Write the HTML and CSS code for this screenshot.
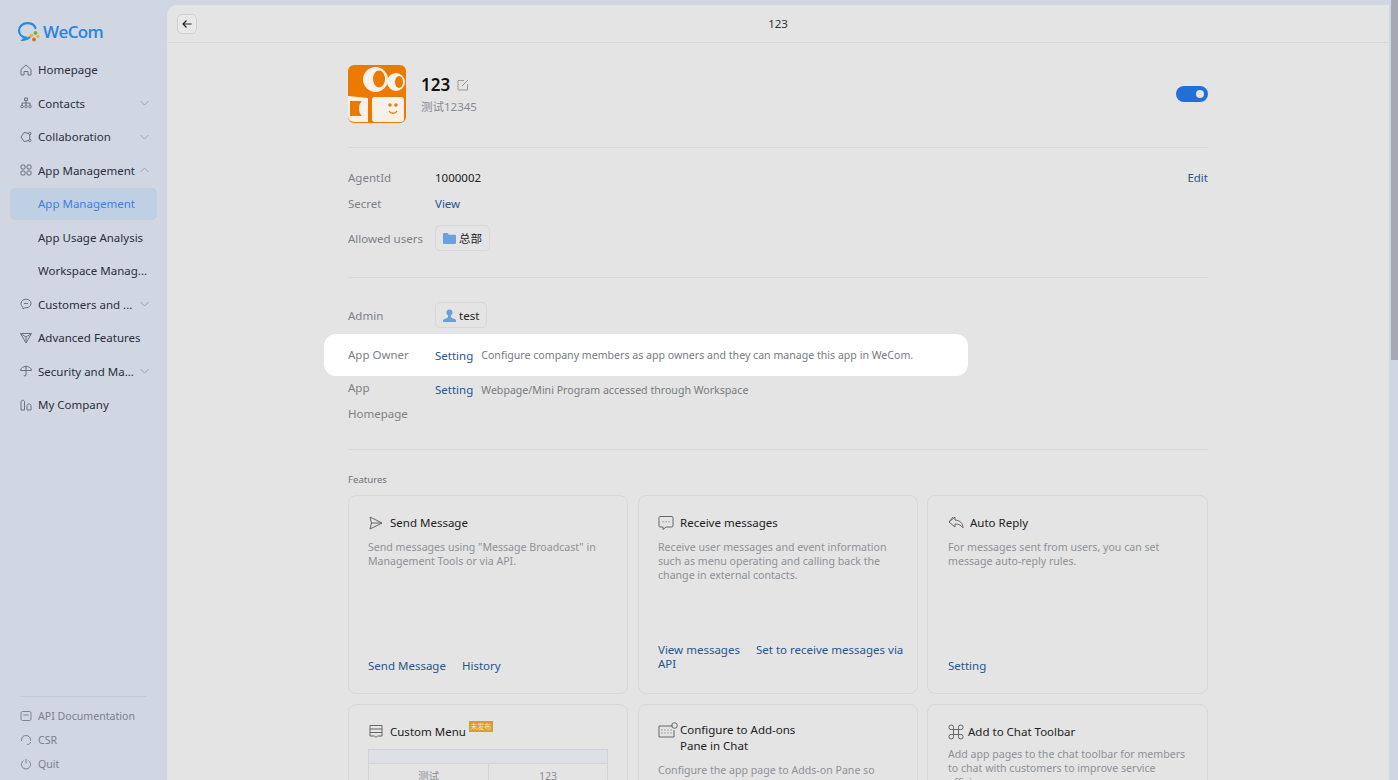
FILE: index.html
```html
<!DOCTYPE html>
<html lang="en">
<head>
  <meta charset="UTF-8" />
  <title>WeCom App Management</title>
  <link rel="stylesheet" href="styles.css">
</head>
<body>
  <aside class="sidebar">
    <div class="logo">
      <svg class="logo-mark" width="24" height="20" viewBox="0 0 24 20">
        <path d="M18.500 6C17.200 3 14.300 1.200 10.500 1.200 5.500 1.200 2 4.500 2 8.500c0 3.800 3 6.500 6.500 7l-2.500 2.500c2.500 0 5-1.200 6.500-2.500" fill="none" stroke="#2b8ae0" stroke-width="2.200" stroke-linecap="round"/>
        <circle cx="18.500" cy="11" r="1.900" fill="#6fb52c"/>
        <circle cx="21" cy="14.500" r="1.600" fill="#f0b020"/>
        <circle cx="17" cy="17.500" r="1.900" fill="#e8642c"/>
        <circle cx="14.500" cy="13.500" r="1.800" fill="#f0b020"/>
      </svg>
      <span class="logo-text">WeCom</span>
    </div>
    <nav class="menu">
      <a class="menu-item">
        <svg class="menu-icon" viewBox="0 0 12 12"><path d="M1 5.500 6 1l5 4.500V11H8V7.500H4V11H1z"/></svg>
        <span class="menu-label">Homepage</span>
      </a>
      <a class="menu-item">
        <svg class="menu-icon" viewBox="0 0 12 12"><path d="M4.500 1h3v2.500h-3zM6 3.500V6M2 8V6h8v2M6 6v2"/><circle cx="2" cy="9.500" r="1.300"/><circle cx="6" cy="9.500" r="1.300"/><circle cx="10" cy="9.500" r="1.300"/></svg>
        <span class="menu-label">Contacts</span>
        <svg class="chevron" viewBox="0 0 10 6"><path d="M1 1l4 4 4-4"/></svg>
      </a>
      <a class="menu-item">
        <svg class="menu-icon" viewBox="0 0 12 12"><path d="M9 2.500 4 1.500 1 6l3 4.500 5-1"/><circle cx="9.800" cy="2.500" r="1.200"/><circle cx="9.800" cy="9.500" r="1.200"/><path d="M9.800 3.700v4.600"/></svg>
        <span class="menu-label">Collaboration</span>
        <svg class="chevron" viewBox="0 0 10 6"><path d="M1 1l4 4 4-4"/></svg>
      </a>
      <a class="menu-item">
        <svg class="menu-icon" viewBox="0 0 12 12"><rect x="1" y="1" width="4" height="4" rx="1"/><rect x="7" y="1" width="4" height="4" rx="1"/><rect x="1" y="7" width="4" height="4" rx="1"/><rect x="7" y="7" width="4" height="4" rx="1"/></svg>
        <span class="menu-label">App Management</span>
        <svg class="chevron" viewBox="0 0 10 6"><path d="M1 5l4-4 4 4"/></svg>
      </a>
      <a class="menu-item active"><span class="menu-label sub">App Management</span></a>
      <a class="menu-item"><span class="menu-label sub">App Usage Analysis</span></a>
      <a class="menu-item"><span class="menu-label sub">Workspace Manag...</span></a>
      <a class="menu-item">
        <svg class="menu-icon" viewBox="0 0 12 12"><path d="M6 1.200c2.800 0 5 1.900 5 4.300S8.800 9.800 6 9.800H4.500L3 11V9.300C1.800 8.500 1 7.100 1 5.500 1 3.100 3.200 1.200 6 1.200zM4 5.500h4"/></svg>
        <span class="menu-label">Customers and ...</span>
        <svg class="chevron" viewBox="0 0 10 6"><path d="M1 1l4 4 4-4"/></svg>
      </a>
      <a class="menu-item">
        <svg class="menu-icon" viewBox="0 0 12 12"><path d="M.500 1.500h11L6 11zM.500 1.500 6 5l5.500-3.500M6 5v6"/></svg>
        <span class="menu-label">Advanced Features</span>
      </a>
      <a class="menu-item">
        <svg class="menu-icon" viewBox="0 0 12 12"><path d="M.500 5.500C.500 3 3 1.500 6 1.500s5.500 1.500 5.500 4zM6 .500V10c0 1.400-2 1.400-2 0"/></svg>
        <span class="menu-label">Security and Ma...</span>
        <svg class="chevron" viewBox="0 0 10 6"><path d="M1 1l4 4 4-4"/></svg>
      </a>
      <a class="menu-item">
        <svg class="menu-icon" viewBox="0 0 12 12"><path d="M1 11V3c0-2.400 3.500-2.400 3.500 0v8zM7 11V6.500c0-2 4-2 4 0V11z"/></svg>
        <span class="menu-label">My Company</span>
      </a>
    </nav>
    <div class="sidebar-foot">
      <a class="foot-item">
        <svg class="foot-icon" viewBox="0 0 12 12"><rect x="1" y="1.500" width="10" height="9" rx="1.500"/><path d="M3.500 5h5"/></svg>
        <span>API Documentation</span>
      </a>
      <a class="foot-item">
        <svg class="foot-icon" viewBox="0 0 12 12"><path d="M1.500 7V5.800C1.500 3.200 3.500 1.500 6 1.500s4.500 1.700 4.500 4.300V7M10.500 8c0 1.600-1.400 2.500-3.500 2.500"/></svg>
        <span>CSR</span>
      </a>
      <a class="foot-item">
        <svg class="foot-icon" viewBox="0 0 12 12"><path d="M3.500 2.500a4.600 4.600 0 1 0 5 0M6 1v4.500"/></svg>
        <span>Quit</span>
      </a>
    </div>
  </aside>

  <main class="main">
    <header class="topbar">
      <button class="back-btn">
        <svg width="10" height="10" viewBox="0 0 10 10"><path d="M9.500 5H1M4.500 1.500 1 5l3.500 3.500" fill="none" stroke="#222" stroke-width="1.200"/></svg>
      </button>
      <div class="topbar-title">123</div>
    </header>

    <div class="content">
      <section class="app-head">
        <svg class="app-icon" width="58" height="58" viewBox="0 0 58 58">
          <rect width="58" height="58" rx="6" fill="#ec7a00"/>
          <circle cx="27.500" cy="14.500" r="12.500" fill="#f9f1e8"/>
          <ellipse cx="31" cy="14" rx="6" ry="8.500" fill="#ec7a00"/>
          <circle cx="48" cy="17" r="9" fill="#f9f1e8"/>
          <ellipse cx="51" cy="17" rx="4" ry="6" fill="#ec7a00"/>
          <rect x="24" y="32" width="32" height="25" rx="3" fill="#f9f1e8"/>
          <circle cx="42" cy="40" r="1.700" fill="#ec7a00"/>
          <circle cx="48" cy="40" r="1.700" fill="#ec7a00"/>
          <path d="M41 46c2 3 6 3 8 0" fill="none" stroke="#ec7a00" stroke-width="1.300"/>
          <path d="M0 31l20 2v24H6a6 6 0 0 1-6-6z" fill="#f9f1e8"/>
          <path d="M2 36h12c-4 3-4 12 0 15H2z" fill="#ec7a00"/>
        </svg>
        <div class="app-meta">
          <div class="app-name">
            <span>123</span>
            <svg class="edit-icon" width="12" height="12" viewBox="0 0 12 12"><path d="M7 1.500H1v9.500h9.500V5M5 7l6-6" fill="none" stroke="#999" stroke-width="1"/></svg>
          </div>
          <div class="app-desc">测试12345</div>
        </div>
        <div class="switch"><span class="switch-knob"></span></div>
      </section>

      <section class="info">
        <div class="info-row">
          <div class="info-label">AgentId</div>
          <div class="info-value">1000002</div>
          <a class="link edit-link">Edit</a>
        </div>
        <div class="info-row">
          <div class="info-label">Secret</div>
          <a class="link">View</a>
        </div>
        <div class="info-row row-users">
          <div class="info-label">Allowed users</div>
          <span class="chip">
            <svg width="13" height="11" viewBox="0 0 14 11" preserveAspectRatio="none"><path d="M0 1.500C0 .7.500 0 1.300 0h3.500l1.500 1.800h6.400c.7 0 1.300.6 1.300 1.300v6.600c0 .7-.6 1.300-1.300 1.300H1.300C.5 11 0 10.400 0 9.700z" fill="#6a9fe0"/></svg>
            总部
          </span>
        </div>
      </section>

      <section class="info info-admin">
        <div class="info-row">
          <div class="info-label">Admin</div>
          <span class="chip">
            <svg width="13" height="13" viewBox="0 0 12 12"><circle cx="6" cy="3.200" r="2.800" fill="#6a9fe0"/><path d="M4.800 5.500h2.400l.3 2.300L12 10v2H0v-2l4.500-2.200z" fill="#6a9fe0"/></svg>
            test
          </span>
        </div>
        <div class="info-row spotlight">
          <div class="info-label">App Owner</div>
          <a class="link">Setting</a>
          <span class="info-note">Configure company members as app owners and they can manage this app in WeCom.</span>
        </div>
        <div class="info-row row-home">
          <div class="info-label tall">App<br>Homepage</div>
          <a class="link">Setting</a>
          <span class="info-note">Webpage/Mini Program accessed through Workspace</span>
        </div>
      </section>

      <section class="features">
        <div class="features-title">Features</div>
        <div class="card-grid">
          <div class="card">
            <div class="card-head">
              <svg class="card-icon" viewBox="0 0 16 16"><path d="M2 2l12 6-12 6 1.500-6zM3.500 8H14"/></svg>
              <span class="card-title">Send Message</span>
            </div>
            <p class="card-desc">Send messages using "Message Broadcast" in Management Tools or via API.</p>
            <div class="card-links"><a class="link">Send Message</a><a class="link">History</a></div>
          </div>
          <div class="card">
            <div class="card-head">
              <svg class="card-icon" viewBox="0 0 16 16"><path d="M2 1.500h12c.5 0 1 .5 1 1v8.500c0 .5-.5 1-1 1H8l-3 2.500V12H2c-.5 0-1-.5-1-1V2.500c0-.5.5-1 1-1zM4.500 6.800h1M7.500 6.800h1M10.500 6.800h1"/></svg>
              <span class="card-title">Receive messages</span>
            </div>
            <p class="card-desc">Receive user messages and event information such as menu operating and calling back the change in external contacts.</p>
            <div class="card-links two-line"><a class="link">View messages</a><a class="link">Set to receive messages via API</a></div>
          </div>
          <div class="card">
            <div class="card-head">
              <svg class="card-icon" viewBox="0 0 16 16"><path d="M7 2 1 7l6 5V9c3.500 0 6 1 8 4 0-5-3-7.500-8-8zM5 2 1 7"/></svg>
              <span class="card-title">Auto Reply</span>
            </div>
            <p class="card-desc">For messages sent from users, you can set message auto-reply rules.</p>
            <div class="card-links"><a class="link">Setting</a></div>
          </div>
          <div class="card">
            <div class="card-head">
              <svg class="card-icon" viewBox="0 0 16 16"><path d="M2 1.500h12v10.500H9.500L8 13.500 6.500 12H2zM2 5h12M2 8.500h12"/></svg>
              <span class="card-title">Custom Menu</span>
              <span class="badge">未发布</span>
            </div>
            <div class="menu-table">
              <div class="menu-table-top"></div>
              <div class="menu-table-row"><span>测试</span><span>123</span></div>
            </div>
          </div>
          <div class="card">
            <div class="card-head wrap">
              <svg class="card-icon addon" viewBox="0 0 20 16"><path d="M15 4H1v11h15V8M3.500 8h1M6.500 8h1M9.500 8h1M12.500 8h1M3.500 11h1M6.500 11h1M9.500 11h1M12.500 11h1"/><circle cx="16.500" cy="3.500" r="2.800"/></svg>
              <span class="card-title">Configure to Add-ons<br>Pane in Chat</span>
            </div>
            <p class="card-desc">Configure the app page to Adds-on Pane so that members can quickly use this app in a chat.</p>
          </div>
          <div class="card">
            <div class="card-head tight">
              <svg class="card-icon" viewBox="0 0 16 16"><path d="M5.500 5.500h5v5h-5zM5.500 5.500H3.800a2.300 2.300 0 1 1 1.700-2zM10.500 5.500h1.700a2.300 2.300 0 1 0-1.700-2zM5.500 10.500H3.800a2.300 2.300 0 1 0 1.700 2zM10.500 10.500h1.700a2.300 2.300 0 1 1-1.700 2z"/></svg>
              <span class="card-title">Add to Chat Toolbar</span>
            </div>
            <p class="card-desc">Add app pages to the chat toolbar for members to chat with customers to improve service efficiency.</p>
          </div>
        </div>
      </section>
    </div>
  </main>

  <div class="scrollbar"><div class="scrollbar-thumb"></div></div>
</body>
</html>
```

FILE: styles.css
```css
* {
  box-sizing: border-box;
}

html,
body {
  height: 100%;
}

body {
  margin: 0;
  display: flex;
  overflow: hidden;
  background-color: #d0d7e3;
  color: #222;
  font-family: "Noto Sans", "Noto Sans CJK SC", sans-serif;
  font-size: 11.5px;
}

a {
  cursor: pointer;
}

/* sidebar */
.sidebar {
  width: 167px;
  flex-shrink: 0;
  height: 780px;
  display: flex;
  flex-direction: column;
  padding: 0 10px;
}

.logo {
  height: 53px;
  padding: 10px 0 0 7px;
  display: flex;
  align-items: center;
  gap: 2px;
}

.logo-text {
  color: #2b84dc;
  font-family: "Open Sans", sans-serif;
  font-size: 17px;
  font-weight: 600;
  letter-spacing: -0.6px;
}

.menu {
  display: flex;
  flex-direction: column;
}

.menu-item {
  height: 33.5px;
  display: flex;
  align-items: center;
  padding: 0 7px 0 10px;
  color: #2a2f3a;
  border-radius: 5px;
}

.menu-item.active {
  background-color: #bfcfe4;
  color: #3f7fdc;
  height: 32px;
  margin: 0.5px 0 1px;
}

.menu-icon {
  width: 12px;
  height: 12px;
  margin-right: 6px;
  flex-shrink: 0;
  fill: none;
  stroke: #6b7280;
  stroke-width: 1;
}

.menu-label {
  flex: 1;
  white-space: nowrap;
}

.menu-label.sub {
  padding-left: 18px;
}

.chevron {
  width: 11px;
  height: 6px;
  flex-shrink: 0;
  fill: none;
  stroke: #9aa3b0;
  stroke-width: 1;
}

.sidebar-foot {
  margin: auto 10px 0;
  border-top: 1px solid #c3cbd8;
  padding: 7px 0 4px;
  display: flex;
  flex-direction: column;
}

.foot-item {
  height: 24px;
  display: flex;
  align-items: center;
  gap: 6px;
  color: #7b818d;
  font-size: 10.6px;
}

.foot-icon {
  width: 12px;
  height: 12px;
  fill: none;
  stroke: #7f8590;
  stroke-width: 1;
}

/* main panel */
.main {
  width: 1222px;
  flex-shrink: 0;
  height: 775px;
  margin-top: 5px;
  background-color: #e4e4e4;
  border-top-left-radius: 10px;
  overflow: hidden;
}

.topbar {
  height: 38px;
  display: flex;
  align-items: center;
  padding-left: 10px;
  border-bottom: 1px solid #d8d8d8;
}

.back-btn {
  width: 20px;
  height: 20px;
  padding: 0;
  display: flex;
  align-items: center;
  justify-content: center;
  background: #e9e9e9;
  border: 1px solid #cfcfcf;
  border-radius: 5px;
}

.topbar-title {
  flex: 1;
  padding-right: 30px;
  text-align: center;
  color: #333;
}

.content {
  width: 860px;
  margin: 0 auto;
}

.app-head {
  display: flex;
  align-items: center;
  padding: 22px 0 24px;
  border-bottom: 1px solid #d8d8d8;
}

.app-icon {
  flex-shrink: 0;
}

.app-meta {
  flex: 1;
  margin-left: 15px;
}

.app-name {
  display: flex;
  align-items: center;
  gap: 7px;
  font-size: 17px;
  font-weight: 600;
  color: #111;
  line-height: 24px;
}

.app-desc {
  margin-top: 2px;
  color: #888c94;
  line-height: 16px;
}

.switch {
  width: 32px;
  height: 16px;
  padding: 4px;
  display: flex;
  justify-content: flex-end;
  background-color: #2170d8;
  border-radius: 8px;
}

.switch-knob {
  width: 8px;
  height: 8px;
  background-color: #e4e4e4;
  border-radius: 50%;
}

.info {
  padding: 16px 0 26px;
  border-bottom: 1px solid #d8d8d8;
}

.info-admin {
  padding: 24px 0 22px;
}

.info-row {
  display: flex;
  align-items: center;
  min-height: 26px;
}

.row-users {
  margin-top: 9px;
}

.info-label {
  width: 87px;
  flex-shrink: 0;
  color: #7d8087;
}

.info-label.tall {
  line-height: 26px;
}

.row-home {
  align-items: flex-start;
  margin-top: -1px;
}

.row-home .link,
.row-home .info-note {
  padding-top: 2px;
  line-height: 26px;
}

.info-value {
  flex: 1;
  color: #222;
}

.link {
  color: #27558e;
}

.edit-link {
  margin-left: auto;
}

.info-note {
  margin-left: 8px;
  color: #777b82;
  font-size: 10.6px;
}

.chip {
  height: 26px;
  padding: 0 7px;
  display: inline-flex;
  align-items: center;
  gap: 3px;
  border: 1px solid #d8d8d8;
  border-radius: 5px;
  color: #222;
}

.spotlight {
  width: 644px;
  height: 42px;
  margin: 6px 0 0 -24px;
  padding-left: 24px;
  background-color: #fff;
  border-radius: 12px;
}

.spotlight .info-label {
  margin-top: -2px;
}

.features {
  padding-top: 23px;
}

.features-title {
  font-size: 9.6px;
  color: #6f7278;
  line-height: 14px;
  margin-bottom: 8px;
}

.card-grid {
  display: grid;
  grid-template-columns: 280px 280px 280px;
  column-gap: 10px;
  grid-auto-rows: 199px;
  row-gap: 10px;
}

.card {
  display: flex;
  flex-direction: column;
  padding: 17px 13px 20px 19px;
  border: 1px solid #d8d8d8;
  border-radius: 8px;
}

.card:nth-child(3n) {
  margin-left: -1px;
  padding-left: 20px;
}

.card-head {
  display: flex;
  align-items: center;
  gap: 6px;
  min-height: 20px;
}

.card-head.wrap {
  align-items: flex-start;
  gap: 2px;
  margin-bottom: 2px;
}

.card-head.tight {
  margin-bottom: -2px;
  gap: 4px;
}

.card-icon {
  width: 16px;
  height: 16px;
  flex-shrink: 0;
  fill: none;
  stroke: #666;
  stroke-width: 1;
}

.card-icon.addon {
  width: 20px;
}

.card-title {
  color: #222;
  line-height: 16px;
}

.badge {
  align-self: flex-start;
  margin: -1px 0 0 -3px;
  padding: 0 1.5px;
  background-color: #e09a2b;
  color: #f7e6c8;
  font-size: 7px;
  line-height: 11px;
}

.card-desc {
  max-width: 238px;
  margin: 7px 0 0;
  color: #8e9197;
  font-size: 10.6px;
  line-height: 14px;
}

.card-links {
  margin-top: auto;
  line-height: 14px;
}

.card-links.two-line {
  margin-bottom: 2px;
}

.card-links .link {
  margin-right: 16px;
}

.card-links .link:last-child {
  margin-right: 0;
}

.menu-table {
  width: 240px;
  margin-top: 7px;
  border: 1px solid #d0d4da;
  color: #8e9197;
  font-size: 10.6px;
}

.menu-table-top {
  height: 14px;
  background-color: #dde0e4;
  border-bottom: 1px solid #d0d4da;
}

.menu-table-row {
  display: grid;
  grid-template-columns: 1fr 1fr;
  text-align: center;
  line-height: 24px;
}

.menu-table-row span + span {
  border-left: 1px solid #d0d4da;
}

/* fake page scrollbar */
.scrollbar {
  flex: 1;
  height: 780px;
  padding-left: 2px;
}

.scrollbar-thumb {
  height: 360px;
  background-color: #a5a8b2;
}
```
